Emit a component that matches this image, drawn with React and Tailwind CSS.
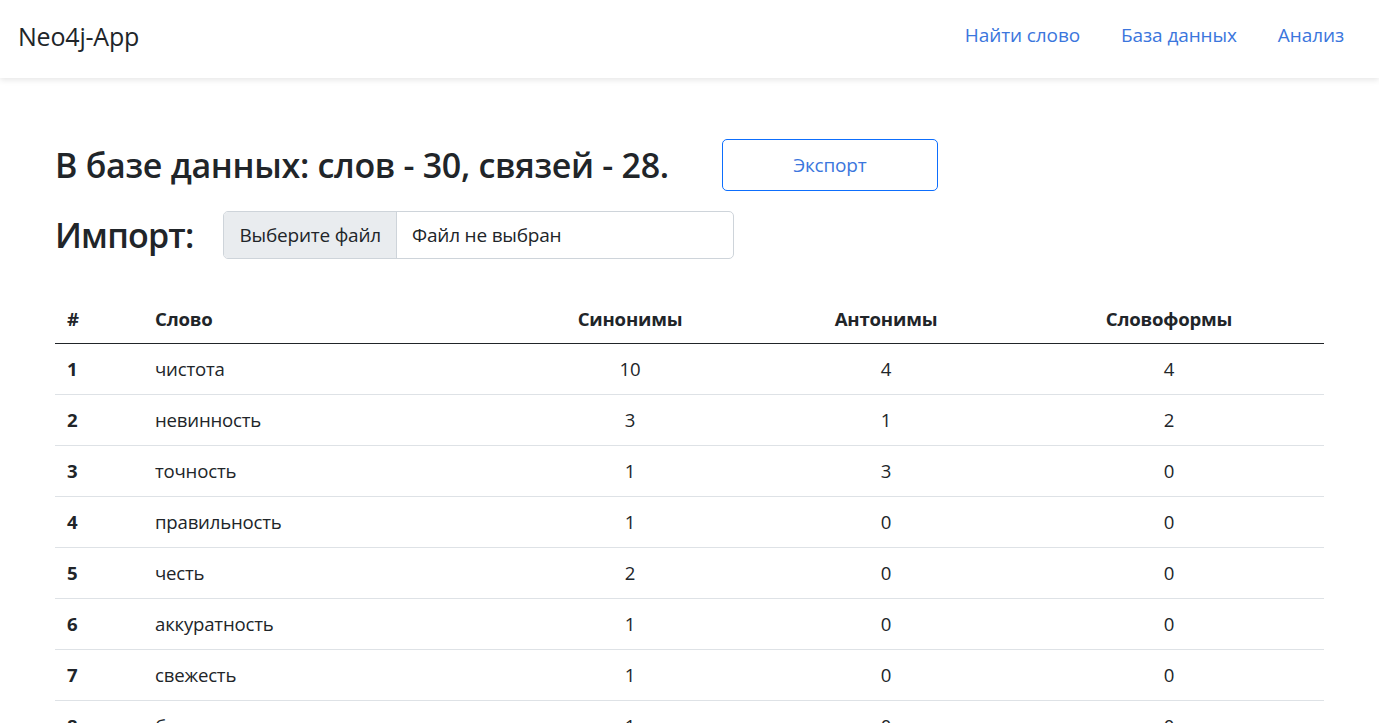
import React from "react";

const rows = [
  [1, "чистота", 10, 4, 4],
  [2, "невинность", 3, 1, 2],
  [3, "точность", 1, 3, 0],
  [4, "правильность", 1, 0, 0],
  [5, "честь", 2, 0, 0],
  [6, "аккуратность", 1, 0, 0],
  [7, "свежесть", 1, 0, 0],
  [8, "безупречность", 1, 0, 0],
];

const cols = "grid grid-cols-[88px_359px_256px_256px_1fr]";

const App = () => {
  return (
    <div className="min-h-screen bg-white text-[#212529] font-['Open_Sans',sans-serif]">
      <nav className="h-[78px] flex items-center justify-between pl-[18px] pr-[35px] pb-[4px] shadow-[0_2px_6px_rgba(0,0,0,0.1)]">
        <span className="text-[25px] tracking-[-0.2px]">Neo4j-App</span>
        <div className="flex gap-[41px] text-[#3b76dd] text-[19px] tracking-[-0.1px] -mt-[3px]">
          <a>Найти слово</a>
          <a>База данных</a>
          <a>Анализ</a>
        </div>
      </nav>

      <main className="px-[55px] pt-[61px]">
        <div className="flex items-center gap-[53px]">
          <h2 className="text-[34px] font-semibold tracking-[-0.3px] leading-tight">
            В базе данных: слов - 30, связей - 28.
          </h2>
          <button className="w-[216px] h-[52px] border border-[#0d6efd] rounded-[5px] text-[#3b76dd] text-[19px] tracking-[-0.2px]">
            Экспорт
          </button>
        </div>

        <div className="flex items-center gap-[30px] mt-[20px]">
          <h2 className="text-[34px] font-semibold tracking-[-0.8px] leading-tight">Импорт:</h2>
          <div className="flex w-[511px] h-[48px] border border-[#ced4da] rounded-[5px] overflow-hidden text-[19px] tracking-[-0.2px]">
            <span className="bg-[#e9ecef] border-r border-[#ced4da] px-[15px] flex items-center">
              Выберите файл
            </span>
            <span className="px-[15px] flex items-center">Файл не выбран</span>
          </div>
        </div>

        <div className="mt-[34px] text-[18.6px] tracking-[-0.2px]">
          <div className={`${cols} h-[51px] items-center border-b border-[#212529] font-bold pt-[2px]`}>
            <div className="px-[12px]">#</div>
            <div className="px-[12px]">Слово</div>
            <div className="text-center">Синонимы</div>
            <div className="text-center">Антонимы</div>
            <div className="text-center">Словоформы</div>
          </div>
          {rows.map(([n, w, s, a, f]) => (
            <div key={n} className={`${cols} h-[51px] items-center border-b border-[#dee2e6]`}>
              <div className="px-[12px] font-bold">{n}</div>
              <div className="px-[12px]">{w}</div>
              <div className="text-center">{s}</div>
              <div className="text-center">{a}</div>
              <div className="text-center">{f}</div>
            </div>
          ))}
        </div>
      </main>
    </div>
  );
};

export default App;
